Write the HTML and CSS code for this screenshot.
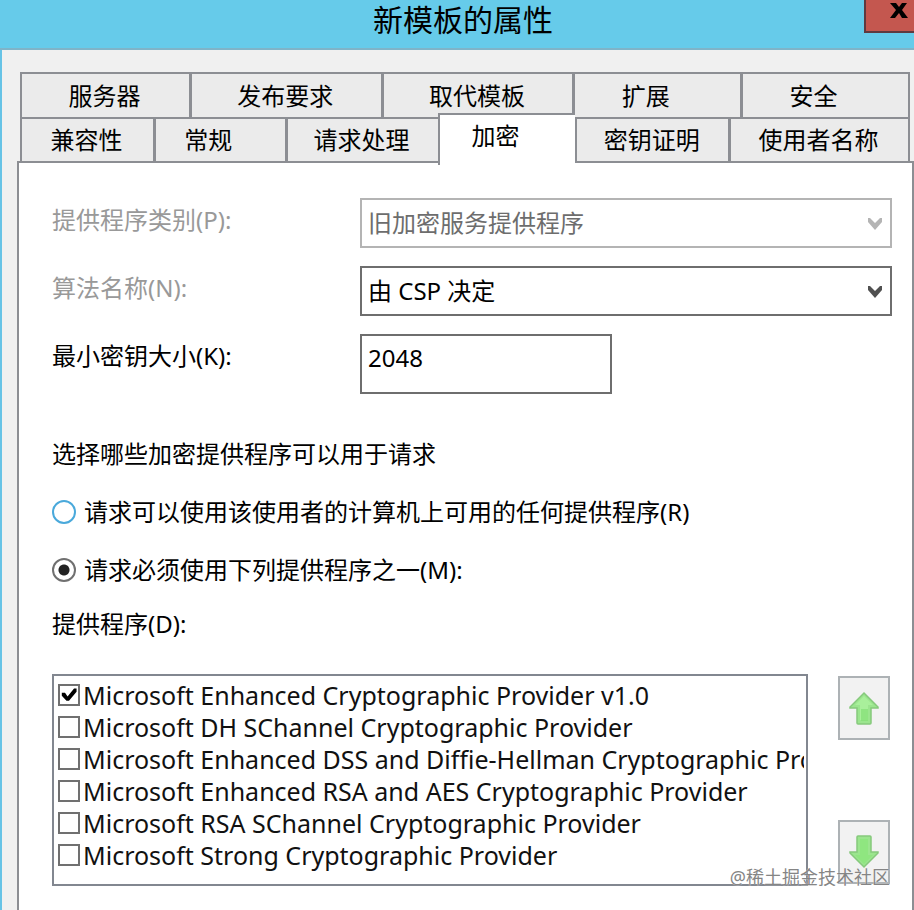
FILE: index.html
```html
<!DOCTYPE html>
<html lang="zh-CN">
<head>
  <meta charset="UTF-8">
  <meta name="viewport" content="width=device-width, initial-scale=1.0">
  <title>新模板的属性</title>
  <link rel="stylesheet" href="styles.css">
</head>
<body>
  <header class="titlebar">
    <h1 class="title">新模板的属性</h1>
    <button type="button" class="close" aria-label="关闭">
      <svg width="20" height="18" viewBox="0 0 20 18"><path d="M1 1h6l3 4 3-4h5l-5 7 6 8h-6l-3-5-4 5H1l6-8z" fill="#000"/></svg>
    </button>
  </header>

  <main class="dialog">
    <nav class="tabs">
      <div class="tab-row tab-row-back">
        <button type="button" class="tab">服务器</button>
        <button type="button" class="tab">发布要求</button>
        <button type="button" class="tab">取代模板</button>
        <button type="button" class="tab short">扩展</button>
        <button type="button" class="tab short">安全</button>
      </div>
      <div class="tab-row tab-row-front">
        <button type="button" class="tab">兼容性</button>
        <button type="button" class="tab short">常规</button>
        <button type="button" class="tab">请求处理</button>
        <button type="button" class="tab short active">加密</button>
        <button type="button" class="tab">密钥证明</button>
        <button type="button" class="tab">使用者名称</button>
      </div>
    </nav>

    <form class="panel">
      <div class="fields">
        <label class="disabled" for="category">提供程序类别(P):</label>
        <div class="select">
          <select id="category" disabled>
            <option>旧加密服务提供程序</option>
          </select>
          <svg class="chevron" width="16" height="14" viewBox="0 0 16 14"><path d="M1 1h2l5 5 5-5h2v4l-7 8-7-8z" fill="#b4b4b4"/></svg>
        </div>

        <label class="disabled" for="algorithm">算法名称(N):</label>
        <div class="select">
          <select id="algorithm">
            <option>由 CSP 决定</option>
          </select>
          <svg class="chevron" width="16" height="14" viewBox="0 0 16 14"><path d="M1 1h2l5 5 5-5h2v4l-7 8-7-8z" fill="#505050"/></svg>
        </div>

        <label for="keysize">最小密钥大小(K):</label>
        <input type="text" id="keysize" class="keysize" value="2048">
      </div>

      <p class="question">选择哪些加密提供程序可以用于请求</p>
      <label class="radio hot"><input type="radio" name="mode">请求可以使用该使用者的计算机上可用的任何提供程序(R)</label>
      <label class="radio"><input type="radio" name="mode" checked>请求必须使用下列提供程序之一(M):</label>
      <p class="list-label" id="list-label">提供程序(D):</p>

      <div class="providers">
        <div class="list" role="group" aria-labelledby="list-label">
          <label class="item"><input type="checkbox" checked>Microsoft Enhanced Cryptographic Provider v1.0</label>
          <label class="item"><input type="checkbox">Microsoft DH SChannel Cryptographic Provider</label>
          <label class="item"><input type="checkbox">Microsoft Enhanced DSS and Diffie-Hellman Cryptographic Provider</label>
          <label class="item"><input type="checkbox">Microsoft Enhanced RSA and AES Cryptographic Provider</label>
          <label class="item"><input type="checkbox">Microsoft RSA SChannel Cryptographic Provider</label>
          <label class="item"><input type="checkbox">Microsoft Strong Cryptographic Provider</label>
        </div>
        <div class="order">
          <button type="button" class="move" aria-label="上移">
            <svg width="30" height="34" viewBox="0 0 30 34"><path d="M15 2 29 16v1h-7v15q0 1-1 1H9q-1 0-1-1V17H1v-1z" fill="#9be58e" stroke="#86c97c" stroke-width="1.5"/><path d="M15 5 24 14H19v15h-8V14H6z" fill="#a9f09b"/><path d="M12 18h7v12h-7z" fill="#7fdc70" opacity=".6"/></svg>
          </button>
          <button type="button" class="move" aria-label="下移">
            <svg width="30" height="34" viewBox="0 0 30 34"><path d="M15 32 29 18v-1h-7V2q0-1-1-1H9Q8 1 8 2v15H1v1z" fill="#9be58e" stroke="#86c97c" stroke-width="1.5"/><path d="M15 29 24 20H19V4h-8v16H6z" fill="#8fe680"/></svg>
          </button>
          <span class="watermark">@稀土掘金技术社区</span>
        </div>
      </div>
    </form>
  </main>
</body>
</html>
```
FILE: styles.css
```css
* {
  box-sizing: border-box;
}

body {
  margin: 0;
  min-height: 100vh;
  display: flex;
  flex-direction: column;
  overflow: hidden;
  background: #f0f0f0;
  color: #000;
  font-family: "Noto Sans", "Noto Sans CJK SC", sans-serif;
  font-size: 24px;
  line-height: 32px;
}

button, input, select {
  font: inherit;
  color: inherit;
}

p {
  margin: 0;
}

/* Title bar */
.titlebar {
  display: flex;
  justify-content: center;
  height: 50px;
  background: #66cbea;
  border-bottom: 2px solid #7fb4c8;
  position: relative;
}

.title {
  margin: 0;
  padding-left: 12px;
  font-size: 30px;
  font-weight: 400;
  line-height: 40px;
}

.close {
  position: absolute;
  top: 0;
  right: 0;
  width: 50px;
  height: 33px;
  padding: 2px 5px 0 0;
  display: flex;
  justify-content: flex-end;
  background: #c4574f;
  border: solid #5f3a40;
  border-width: 0 0 2px 2px;
}

.dialog {
  flex: 1;
  display: flex;
  flex-direction: column;
  padding: 22px 0 0 15px;
  border-left: 2px solid #66c3e6;
}

/* Tabs */
.tabs {
  padding: 0 4px 0 3px;
}

.tab-row {
  display: grid;
  border-right: 2px solid #8c8e93;
}

.tab-row-back {
  grid-template-columns: 169fr 192fr 192fr 168fr 168fr;
}

.tab-row-front {
  grid-template-columns: 133fr 132fr 153fr 138fr 153fr 180fr;
}

.tab {
  height: 45px;
  padding: 0 2px 0 0;
  background: #ebebeb;
  border: solid #8c8e93;
  border-width: 2px 0 0 3px;
  white-space: nowrap;
}

.tab-row-front .tab {
  height: 44px;
}

.tab:first-child {
  border-left-width: 2px;
}

.tab.short {
  padding-right: 24px;
}

.tab-row-front .tab.active {
  height: 52px;
  margin: -4px 0;
  padding-bottom: 8px;
  background: #fff;
  border-width: 2px 0 0 2px;
  z-index: 1;
}

.tab.active + .tab {
  border-left-width: 2px;
}

/* Page */
.panel {
  flex: 1;
  padding: 35px 20px 24px 33px;
  background: #fff;
  border: 2px solid #8c8e93;
  border-bottom: 0;
}

.fields {
  display: grid;
  grid-template-columns: 308px 1fr;
  row-gap: 18px;
}

.fields label {
  line-height: 44px;
}

.disabled {
  color: #999;
}

.select {
  display: flex;
  position: relative;
}

.select select {
  appearance: none;
  flex: 1;
  height: 50px;
  padding: 0 40px 0 6px;
  background: #fff;
  border: 2px solid #6e6e6e;
  border-radius: 0;
}

.select select:disabled {
  color: #6d6d6d;
  border-color: #b4b4b4;
  opacity: 1;
}

.chevron {
  position: absolute;
  right: 9px;
  top: 19px;
  pointer-events: none;
}

.keysize {
  width: 252px;
  height: 60px;
  padding: 0 6px 14px;
  border: 2px solid #6e6e6e;
}

.question {
  margin-top: 44px;
}

.radio {
  display: flex;
  align-items: center;
  gap: 8px;
  margin-top: 26px;
}

.radio input {
  appearance: none;
  flex: none;
  width: 24px;
  height: 24px;
  margin: 0;
  background: #fff;
  border: 2px solid #707070;
  border-radius: 50%;
}

.radio.hot input {
  border-color: #4aa9db;
}

.radio input:checked {
  background: radial-gradient(circle, #222 5px, #fff 6px);
}

.list-label {
  margin-top: 22px;
}

/* Provider list */
.providers {
  display: flex;
  gap: 30px;
  margin-top: 34px;
}

.list {
  flex: 1;
  min-width: 0;
  height: 212px;
  padding: 3px 2px 3px 4px;
  border: 2px solid #828790;
}

.item {
  display: flex;
  align-items: center;
  gap: 3px;
  height: 32px;
  overflow: hidden;
  white-space: nowrap;
  color: #111;
  font-size: 25px;
}

.item input {
  appearance: none;
  flex: none;
  width: 22px;
  height: 22px;
  margin: 0;
  background: #fff;
  border: 2px solid #707070;
}

.item input:checked::before {
  content: "";
  display: block;
  width: 18px;
  height: 18px;
  background: #000;
  clip-path: polygon(10% 38%, 28% 38%, 42% 58%, 78% 14%, 92% 14%, 92% 32%, 50% 82%, 36% 82%, 10% 54%);
}

.order {
  display: flex;
  flex-direction: column;
  justify-content: space-between;
  padding: 2px 2px 2px 0;
  position: relative;
}

.move {
  width: 52px;
  height: 64px;
  padding: 0;
  display: flex;
  align-items: center;
  justify-content: center;
  background: #f2f2f2;
  border: 2px solid #adb2b5;
}

.watermark {
  position: absolute;
  right: 2px;
  bottom: -4px;
  font-size: 18px;
  line-height: 26px;
  white-space: nowrap;
  color: #858585;
  text-shadow: 0 0 1px #fff;
}
```
